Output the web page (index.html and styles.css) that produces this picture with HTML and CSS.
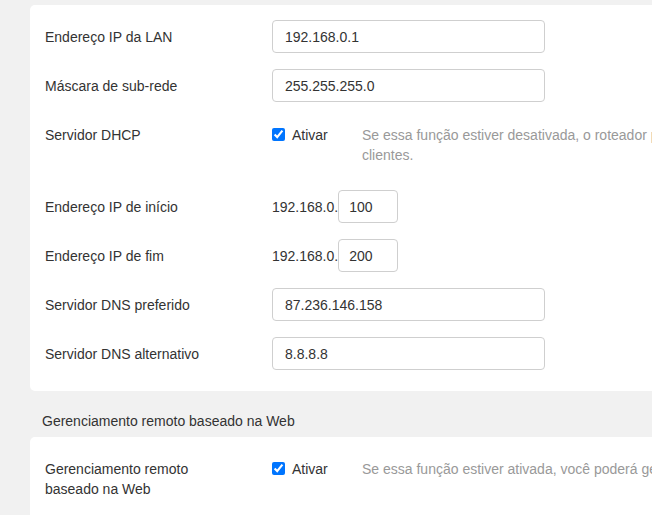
FILE: index.html
```html
<!DOCTYPE html>
<html lang="pt-BR">
<head>
  <meta charset="UTF-8" />
  <title>Configurações de LAN</title>
  <link rel="stylesheet" href="styles.css">
</head>
<body>
  <div class="page">
    <div class="card">
      <div class="row">
        <label class="label">Endereço IP da LAN</label>
        <input class="field" type="text" value="192.168.0.1">
      </div>
      <div class="row">
        <label class="label">Máscara de sub-rede</label>
        <input class="field" type="text" value="255.255.255.0">
      </div>
      <div class="row row-check">
        <label class="label">Servidor DHCP</label>
        <label class="check">
          <input type="checkbox" checked>
          <span>Ativar</span>
        </label>
        <p class="desc">Se essa função estiver desativada, o roteador parará de atribuir endereços IP aos<br>clientes.</p>
      </div>
      <div class="row">
        <label class="label">Endereço IP de início</label>
        <span class="prefix">192.168.0.</span>
        <input class="field field-small" type="text" value="100">
      </div>
      <div class="row">
        <label class="label">Endereço IP de fim</label>
        <span class="prefix">192.168.0.</span>
        <input class="field field-small" type="text" value="200">
      </div>
      <div class="row">
        <label class="label">Servidor DNS preferido</label>
        <input class="field" type="text" value="87.236.146.158">
      </div>
      <div class="row">
        <label class="label">Servidor DNS alternativo</label>
        <input class="field" type="text" value="8.8.8.8">
      </div>
    </div>

    <h3 class="section-title">Gerenciamento remoto baseado na Web</h3>

    <div class="card">
      <div class="row">
        <label class="label">Gerenciamento remoto<br>baseado na Web</label>
        <label class="check">
          <input type="checkbox" checked>
          <span>Ativar</span>
        </label>
        <p class="desc">Se essa função estiver ativada, você poderá gerenciar o roteador remotamente pela Internet.</p>
      </div>
      <div class="row">
        <label class="label">Porta</label>
        <input class="field" type="text" value="8080">
      </div>
    </div>
  </div>
</body>
</html>
```

FILE: styles.css
```css
body {
  margin: 0;
  background: #f1f1f1;
  font-family: "Liberation Sans", Arial, sans-serif;
  font-size: 14px;
  color: #333;
  overflow: hidden;
}

.page {
  padding: 5px 0 0 30px;
  width: 1000px;
}

.card {
  background: #fff;
  border-radius: 5px;
  padding: 15px 15px 5px;
  display: flex;
  flex-direction: column;
}

.row {
  display: flex;
  align-items: flex-start;
  margin-bottom: 16px;
}

.row-check {
  min-height: 56px;
}

.label {
  width: 227px;
  flex-shrink: 0;
  padding-top: 6.5px;
  line-height: 20px;
  color: #333;
}

.field {
  width: 273px;
  height: 33px;
  box-sizing: border-box;
  border: 1px solid #cfcfcf;
  border-radius: 4px;
  padding: 0 12px;
  font-family: inherit;
  font-size: 14px;
  color: #333;
  background: #fff;
  outline: none;
}

.field-small {
  width: 60px;
  padding: 0 10px;
}

.prefix {
  padding-top: 6.5px;
  line-height: 20px;
}

.check {
  width: 90px;
  flex-shrink: 0;
  display: flex;
  align-items: center;
  padding-top: 6.5px;
  line-height: 20px;
}

.check input {
  width: 13px;
  height: 13px;
  margin: 0 7px 0 0;
  accent-color: #0075ff;
}

.desc {
  margin: 0;
  padding-top: 6.5px;
  line-height: 20px;
  color: #999;
}

.section-title {
  margin: 0;
  padding: 20px 0 6px 12px;
  font-size: 14px;
  font-weight: normal;
  line-height: 20px;
  color: #333;
}
```
